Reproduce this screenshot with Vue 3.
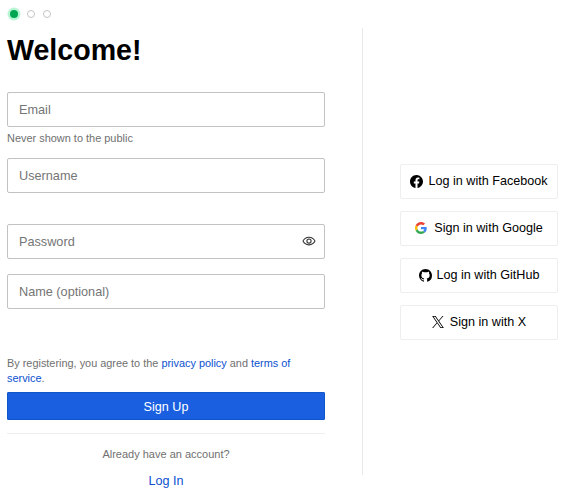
<script setup>
import { ref } from 'vue'

const showPassword = ref(false)

const providers = [
  { label: 'Log in with Facebook', icon: 'facebook' },
  { label: 'Sign in with Google', icon: 'google' },
  { label: 'Log in with GitHub', icon: 'github' },
  { label: 'Sign in with X', icon: 'x' },
]
</script>

<template>
  <div class="page">
    <div class="steps">
      <span class="step step--active"></span>
      <span class="step"></span>
      <span class="step"></span>
    </div>
    <div class="columns">
      <form class="form" @submit.prevent>
        <h1 class="title">Welcome!</h1>

        <div class="field field--email">
          <input class="input" type="email" placeholder="Email" />
          <div class="hint">Never shown to the public</div>
        </div>
        <div class="field field--username">
          <input class="input" type="text" placeholder="Username" />
        </div>
        <div class="field field--password">
          <input class="input" :type="showPassword ? 'text' : 'password'" placeholder="Password" />
          <button class="eye" type="button" aria-label="Show password" @click="showPassword = !showPassword">
            <svg width="14" height="14" viewBox="0 0 16 16" fill="currentColor">
              <path d="M8 3C4.400 3 1.500 5.400.5 8c1 2.600 3.900 5 7.500 5s6.500-2.400 7.500-5c-1-2.600-3.900-5-7.500-5Zm0 1.200c2.900 0 5.200 1.800 6.200 3.800-1 2-3.300 3.800-6.200 3.800S2.800 10 1.800 8C2.800 6 5.100 4.200 8 4.200Z" />
              <path d="M8 5a3 3 0 1 0 0 6 3 3 0 0 0 0-6Zm0 1.200a1.800 1.800 0 1 1 0 3.600 1.800 1.800 0 0 1 0-3.600Z" />
            </svg>
          </button>
        </div>
        <div class="field field--name">
          <input class="input" type="text" placeholder="Name (optional)" />
        </div>

        <p class="terms">
          By registering, you agree to the
          <a href="#">privacy policy</a> and <a href="#">terms of service</a>.
        </p>
        <button class="submit" type="submit">Sign Up</button>

        <div class="login">
          <div class="login-text">Already have an account?</div>
          <a class="login-link" href="#">Log In</a>
        </div>
      </form>

      <div class="social">
        <button v-for="item in providers" :key="item.icon" class="provider" type="button">
          <svg v-if="item.icon === 'facebook'" class="icon" viewBox="0 0 16 16" fill="#000">
            <path d="M16 8.049c0-4.446-3.582-8.050-8-8.050C3.580 0-.002 3.603-.002 8.050c0 4.017 2.926 7.347 6.750 7.951v-5.625h-2.030V8.050H6.750V6.275c0-2.017 1.195-3.131 3.022-3.131.876 0 1.791.157 1.791.157v1.980h-1.009c-.993 0-1.303.621-1.303 1.258v1.510h2.218l-.354 2.326H9.250V16c3.824-.604 6.750-3.934 6.750-7.951Z" />
          </svg>
          <svg v-else-if="item.icon === 'google'" class="icon icon--google" viewBox="0 0 48 48">
            <path fill="#EA4335" d="M24 9.500c3.540 0 6.710 1.220 9.210 3.600l6.850-6.850C35.900 2.380 30.470 0 24 0 14.620 0 6.510 5.380 2.560 13.220l7.980 6.190C12.430 13.720 17.740 9.500 24 9.500z" />
            <path fill="#4285F4" d="M46.980 24.550c0-1.570-.15-3.090-.38-4.550H24v9.020h12.940c-.58 2.960-2.260 5.480-4.780 7.180l7.730 6c4.510-4.180 7.090-10.360 7.090-17.650z" />
            <path fill="#FBBC05" d="M10.530 28.590c-.48-1.450-.76-2.990-.76-4.590s.27-3.140.76-4.590l-7.980-6.190C.92 16.460 0 20.120 0 24c0 3.880.92 7.540 2.560 10.780l7.970-6.190z" />
            <path fill="#34A853" d="M24 48c6.480 0 11.930-2.130 15.890-5.810l-7.730-6c-2.150 1.450-4.920 2.300-8.160 2.300-6.260 0-11.570-4.220-13.470-9.910l-7.980 6.190C6.510 42.620 14.620 48 24 48z" />
          </svg>
          <svg v-else-if="item.icon === 'github'" class="icon" viewBox="0 0 16 16" fill="#000">
            <path d="M8 0C3.580 0 0 3.580 0 8c0 3.540 2.290 6.530 5.470 7.590.4.070.55-.17.55-.38 0-.19-.01-.82-.01-1.490-2.010.37-2.530-.49-2.690-.94-.09-.23-.48-.94-.82-1.130-.28-.15-.68-.52-.01-.53.63-.01 1.080.58 1.230.82.720 1.210 1.870.87 2.330.66.070-.52.280-.87.510-1.070-1.780-.2-3.640-.89-3.640-3.950 0-.87.310-1.590.820-2.150-.08-.2-.36-1.020.08-2.120 0 0 .67-.21 2.200.82.640-.18 1.320-.27 2-.27s1.360.09 2 .27c1.530-1.040 2.200-.82 2.200-.82.440 1.100.16 1.920.08 2.120.51.560.82 1.270.82 2.150 0 3.070-1.870 3.750-3.650 3.950.29.250.54.730.54 1.480 0 1.070-.01 1.930-.01 2.200 0 .21.150.46.550.38A8.010 8.010 0 0 0 16 8c0-4.420-3.580-8-8-8Z" />
          </svg>
          <svg v-else class="icon icon--x" viewBox="0 0 24 24" fill="#000">
            <path d="M14.234 10.162 22.977 0h-2.072l-7.591 8.824L7.251 0H.258l9.168 13.343L.258 24H2.330l8.016-9.318L16.749 24h6.993zm-2.837 3.299-.929-1.329L3.076 1.560h3.182l5.965 8.532.929 1.329 7.754 11.091h-3.182z" />
          </svg>
          <span class="provider-label">{{ item.label }}</span>
        </button>
      </div>
    </div>
  </div>
</template>

<style>
html,
body {
  margin: 0;
  background: #fff;
}
</style>

<style scoped>
.page {
  width: 567px;
  height: 500px;
  box-sizing: border-box;
  padding: 9px 9px 0 7px;
  overflow: hidden;
  font-family: 'Liberation Sans', Arial, sans-serif;
  color: #000;
}

.steps {
  display: flex;
  align-items: center;
  gap: 8.500px;
  height: 10px;
  margin-left: 3px;
}

.step {
  width: 8px;
  height: 8px;
  box-sizing: border-box;
  border: 1px solid #c4c4c4;
  border-radius: 50%;
}

.step--active {
  border: 0;
  background: #00a651;
  box-shadow: 0 0 0 2.500px #b8f5d4;
}

.columns {
  display: flex;
  margin-top: 9px;
}

.form {
  width: 318px;
  height: 447px;
  flex: none;
}

.title {
  margin: 0;
  font-size: 28.600px;
  line-height: 44px;
  font-weight: 700;
}

.field {
  position: relative;
}

.field--email {
  margin-top: 20px;
}

.field--username {
  margin-top: 13px;
}

.field--password {
  margin-top: 31px;
}

.field--name {
  margin-top: 15px;
}

.input {
  display: block;
  width: 100%;
  height: 35px;
  box-sizing: border-box;
  padding: 1px 11px 0;
  border: 1px solid #c2c2c2;
  border-radius: 2px;
  outline: none;
  background: #fff;
  font-family: inherit;
  font-size: 12.700px;
  color: #222;
}

.input::placeholder {
  color: #757575;
  opacity: 1;
}

.hint {
  margin-top: 4px;
  font-size: 10.950px;
  line-height: 14px;
  color: #707070;
}

.eye {
  position: absolute;
  top: 10px;
  right: 9px;
  display: flex;
  padding: 0;
  border: 0;
  background: none;
  color: #333;
}

.terms {
  margin: 47px 0 0;
  font-size: 10.900px;
  line-height: 15px;
  color: #707070;
}

.terms a {
  color: #0b52d0;
  text-decoration: none;
}

.submit {
  display: block;
  width: 100%;
  height: 28px;
  margin-top: 6px;
  padding: 1px 0 0;
  border: 1px solid #0f56c9;
  border-radius: 1px;
  background: #1a5fdf;
  font-family: inherit;
  font-size: 12.600px;
  color: #fff;
}

.login {
  margin-top: 13px;
  padding-top: 13px;
  border-top: 1px solid #eee;
  text-align: center;
}

.login-text {
  font-size: 11px;
  line-height: 15px;
  color: #707070;
}

.login-link {
  display: block;
  margin-top: 11px;
  font-size: 12.600px;
  line-height: 16px;
  color: #0b52d0;
  text-decoration: none;
}

.social {
  flex: 1;
  height: 447px;
  box-sizing: border-box;
  margin-left: 37px;
  padding-left: 37px;
  border-left: 1px solid #e8e8e8;
  display: flex;
  flex-direction: column;
  justify-content: center;
  gap: 12px;
}

.provider {
  display: flex;
  align-items: center;
  justify-content: center;
  gap: 5px;
  width: 158px;
  height: 35px;
  padding: 0;
  border: 1px solid #eee;
  border-radius: 2px;
  background: #fff;
  font-family: inherit;
  font-size: 12.600px;
  color: #000;
}

.icon {
  width: 13px;
  height: 13px;
  flex: none;
}

.icon--google {
  width: 12px;
  height: 12px;
  margin-right: 2px;
}

.icon--x {
  width: 12px;
  height: 12px;
  margin-right: 1px;
}
</style>
